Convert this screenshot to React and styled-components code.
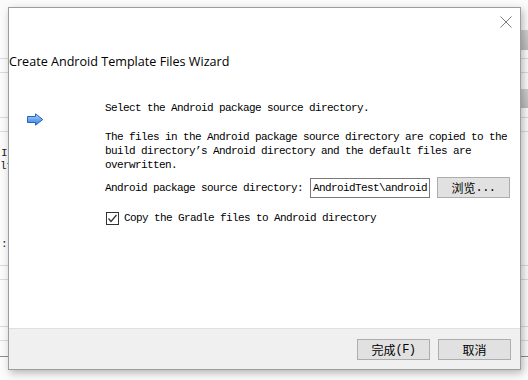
import React from "react";
import styled, { createGlobalStyle } from "styled-components";

const GlobalStyle = createGlobalStyle`
  html, body {
    margin: 0;
    padding: 0;
    background: #f7f7f7;
  }
  * { box-sizing: border-box; }
`;

const Screen = styled.div`
  position: relative;
  width: 528px;
  height: 380px;
  overflow: hidden;
  background: #f7f7f7;
`;

const Backdrop = styled.div`
  display: flex;
  flex-direction: column;
  width: 100%;
  height: 100%;
  background: #fbfbfb;
`;

const BackRow = styled.div`
  display: flex;
  justify-content: space-between;
  align-items: flex-end;
  height: ${(p) => p.h}px;
  border-bottom: ${(p) => (p.line ? `1px solid ${p.line}` : "none")};
  font-family: "Liberation Mono", monospace;
  font-size: 11px;
  color: #222;
`;

const Shade = styled.div`
  width: 120px;
  height: 100%;
  background: linear-gradient(#cfcfcf, #bdbdbd);
`;

const Fragment = styled.span`
  line-height: 13px;
  margin-left: ${(p) => p.x || 0}px;
`;

const Dialog = styled.div`
  position: absolute;
  left: 8px;
  top: 7px;
  width: 513px;
  height: 363px;
  display: flex;
  flex-direction: column;
  background: #fff;
  border: 1px solid #9d9d9d;
  box-shadow: 2px 3px 8px rgba(0, 0, 0, 0.28);
`;

const TitleBar = styled.div`
  display: flex;
  justify-content: flex-end;
  height: 38px;
  padding: 8px 8px 0 0;
`;

const CloseButton = styled.button`
  width: 12px;
  height: 12px;
  padding: 0;
  border: none;
  background: none;
  display: flex;
`;

const Heading = styled.div`
  margin-top: 8px;
  font-family: "Open Sans", "Noto Sans", sans-serif;
  font-size: 12.6px;
  line-height: 16px;
  color: #000;
`;

const Body = styled.div`
  display: flex;
  margin-top: 31px;
  padding-left: 18px;
`;

const ArrowBox = styled.div`
  width: 78px;
  padding-top: 11px;
`;

const Column = styled.div`
  display: flex;
  flex-direction: column;
  font-family: "Liberation Mono", monospace;
  font-size: 11px;
  letter-spacing: -0.6px;
  line-height: 14px;
  color: #000;
`;

const Para = styled.p`
  margin: 0;
  margin-top: ${(p) => p.gap || 0}px;
  width: 410px;
`;

const FieldRow = styled.div`
  display: flex;
  align-items: center;
  margin-top: 5px;
  height: 21px;
`;

const Label = styled.span`
  width: 205px;
`;

const TextBox = styled.div`
  width: 120px;
  height: 20px;
  border: 1px solid #7a7a7a;
  padding: 0 0 0 2px;
  line-height: 18px;
  overflow: hidden;
  white-space: nowrap;
`;

const Button = styled.button`
  width: 73px;
  height: 21px;
  margin-left: ${(p) => p.gap || 0}px;
  padding: 0;
  background: #e1e1e1;
  border: 1px solid #adadad;
  font-family: "Liberation Mono", "Noto Sans CJK SC", monospace;
  font-size: 12px;
  letter-spacing: -0.6px;
  color: #000;
  display: flex;
  align-items: center;
  justify-content: center;
`;

const Han = styled.span`
  font-family: "Noto Sans CJK SC", sans-serif;
  font-size: 12px;
  letter-spacing: 0;
`;

const CheckRow = styled.label`
  display: flex;
  align-items: center;
  margin-top: 13px;
  margin-left: 1px;
  gap: 5px;
`;

const Box = styled.span`
  width: 13px;
  height: 13px;
  border: 1px solid #333;
  background: #fff;
  display: flex;
`;

const Filler = styled.div`
  flex: 1;
`;

const Footer = styled.div`
  display: flex;
  justify-content: flex-end;
  height: 41px;
  padding: 10px 9px 0 0;
  background: #f0f0f0;
  border-top: 1px solid #dfdfdf;
`;

const Arrow = () => (
  <svg width="17" height="13" viewBox="0 0 17 13">
    <defs>
      <linearGradient id="ag" x1="0" y1="0" x2="0" y2="1">
        <stop offset="0" stopColor="#b8d8fb" />
        <stop offset="0.5" stopColor="#6aa8ee" />
        <stop offset="1" stopColor="#3d7fd8" />
      </linearGradient>
    </defs>
    <path
      d="M0.5 3.5 H8.5 V0.8 L15.8 6.5 L8.5 12.2 V9.5 H0.5 Z"
      fill="url(#ag)"
      stroke="#2c64b8"
      strokeWidth="1"
      strokeLinejoin="round"
    />
  </svg>
);

const CloseIcon = () => (
  <svg width="12" height="12" viewBox="0 0 12 12">
    <path d="M0.5 0.5 L11.5 11.5 M11.5 0.5 L0.5 11.5" stroke="#7a7a7a" strokeWidth="1" />
  </svg>
);

const Check = () => (
  <svg width="11" height="11" viewBox="0 0 11 11">
    <path d="M1.5 5.5 L4 8.5 L9.5 2" fill="none" stroke="#333" strokeWidth="1.3" />
  </svg>
);

const rows = [
  { h: 30 },
  { h: 20, shade: true },
  { h: 9, line: "#dadada" },
  { h: 14, line: "#dadada" },
  { h: 16 },
  { h: 19, shade: true },
  { h: 10, line: "#dadada" },
  { h: 14, line: "#dadada" },
  { h: 28, text: "I", x: 1 },
  { h: 13, text: "lf" },
  { h: 78, text: ":", x: 1 },
  { h: 15, line: "#dadada" },
  { h: 14, line: "#dadada" },
  { h: 47, line: "#dadada" },
  { h: 14, line: "#dadada" },
  { h: 16, line: "#8c8c8c" },
];

export default function App() {
  return (
    <Screen>
      <GlobalStyle />
      <Backdrop>
        {rows.map((r, i) => (
          <BackRow key={i} h={r.h} line={r.line}>
            {r.text ? <Fragment x={r.x}>{r.text}</Fragment> : <span />}
            {r.shade ? <Shade /> : null}
          </BackRow>
        ))}
      </Backdrop>
      <Dialog>
        <TitleBar>
          <CloseButton aria-label="close">
            <CloseIcon />
          </CloseButton>
        </TitleBar>
        <Heading>Create Android Template Files Wizard</Heading>
        <Body>
          <ArrowBox>
            <Arrow />
          </ArrowBox>
          <Column>
            <Para>Select the Android package source directory.</Para>
            <Para gap={15}>
              The files in the Android package source directory are copied to the
              build directory’s Android directory and the default files are
              overwritten.
            </Para>
            <FieldRow>
              <Label>Android package source directory:</Label>
              <TextBox>AndroidTest\android</TextBox>
              <Button gap={7}>
                <Han>浏览</Han>...
              </Button>
            </FieldRow>
            <CheckRow>
              <Box>
                <Check />
              </Box>
              Copy the Gradle files to Android directory
            </CheckRow>
          </Column>
        </Body>
        <Filler />
        <Footer>
          <Button>
            <Han>完成</Han>(F)
          </Button>
          <Button gap={8}>
            <Han>取消</Han>
          </Button>
        </Footer>
      </Dialog>
    </Screen>
  );
}
